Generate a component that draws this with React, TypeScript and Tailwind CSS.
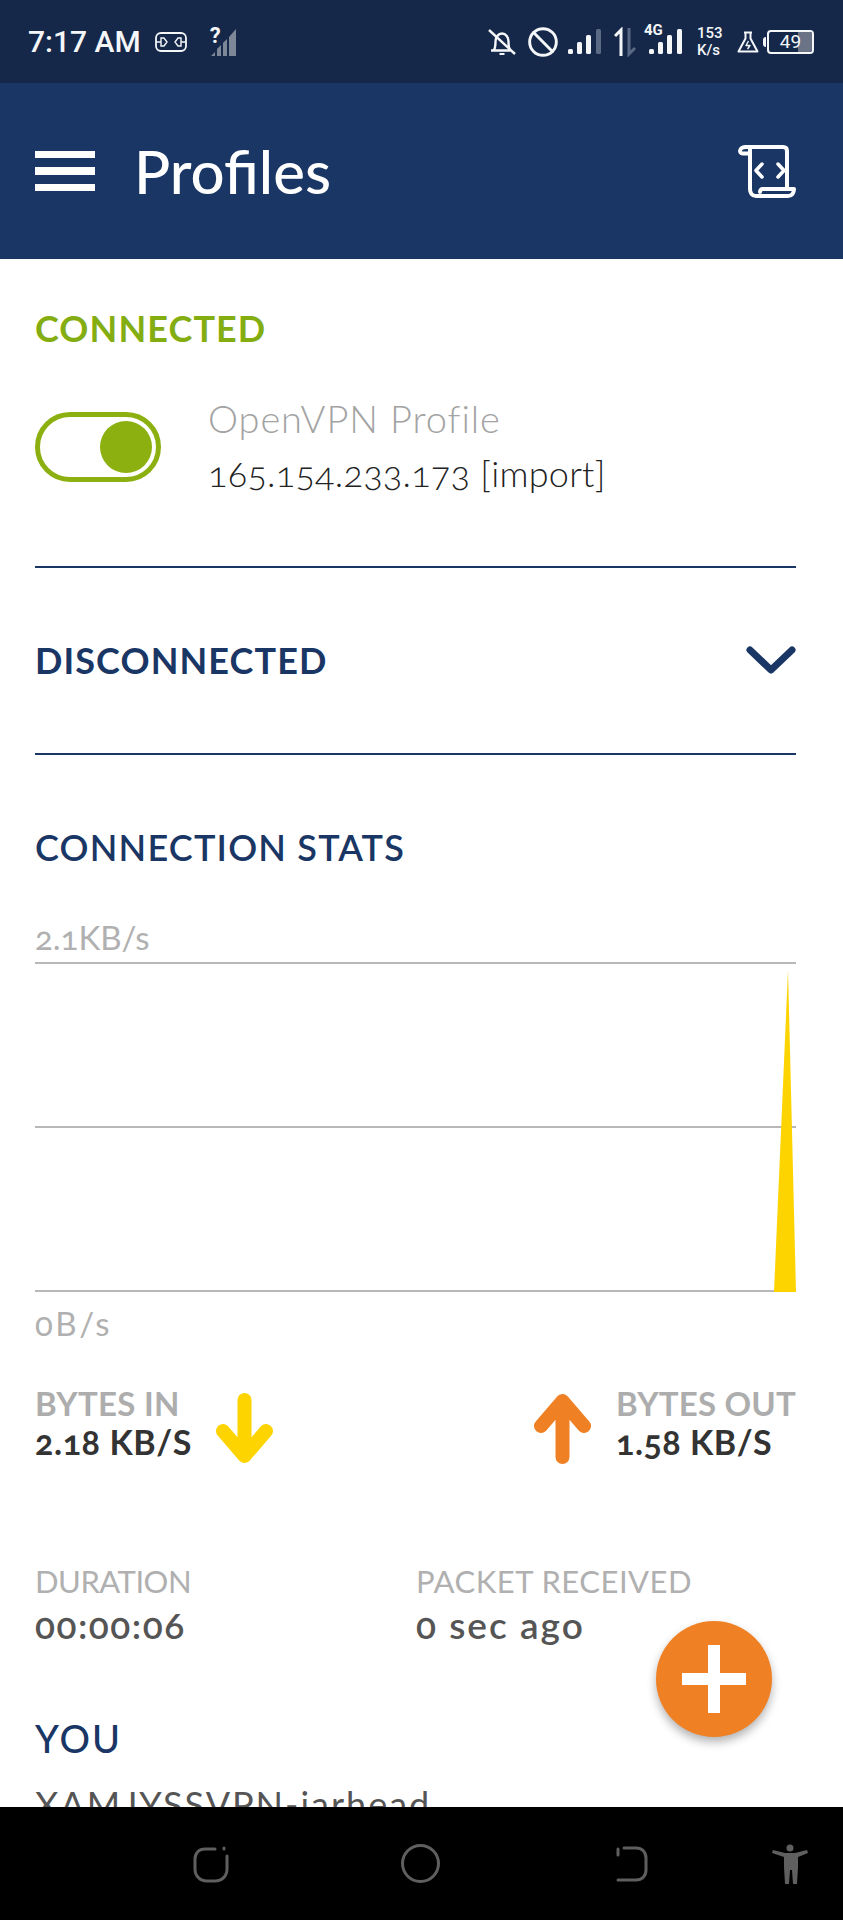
import { Ban } from "lucide-react";

function BellOff() {
    return (
        <svg viewBox="0 0 28 28" className="w-[28px] h-[28px]" fill="none" stroke="#f4f6f8" strokeWidth="2.400">
            <path d="M3 22.500h19.500M5.500 22.500c2-2 2-5 2-9 0-4 2.500-8 6.500-8s6.500 4 6.500 8c0 3 0 6 1.500 8.500" />
            <path d="M1 2l26 24" />
            <path d="M11.500 26h5" strokeWidth="2" />
        </svg>
    );
}

function Bars({ dim }: { dim?: boolean }) {
    return (
        <svg viewBox="0 0 34 26" className="w-[34px] h-[26px]" fill="#f4f6f8">
            <rect x="0" y="20" width="5" height="5" rx="1.500" />
            <rect x="9" y="13" width="5" height="12" rx="1.500" />
            <rect x="18" y="6" width="5" height="19" rx="1.500" />
            <rect x="28" y="0" width="5" height="25" rx="1.500" fill={dim ? "#5a6a85" : "#f4f6f8"} />
        </svg>
    );
}

function ScrollIcon() {
    return (
        <svg viewBox="0 0 58 53" className="w-[58px] h-[53px]" fill="none" stroke="#fff" strokeWidth="4" strokeLinejoin="round" strokeLinecap="round">
            <path d="M8 2h37c3 0 4 2 4 4v37" />
            <path d="M8 2c-3 0-6 1.500-6 4 0 2 2 2.500 3 2.500h7" />
            <path d="M12 4v40c0 4 2 7 6 7h32c4 0 6-3 6-7H24c-1 0-2 2-2 3" />
            <path d="M24 19l-6 6.500 6 6.500M40 19l6 6.500-6 6.500" strokeWidth="3.500" />
        </svg>
    );
}

function Arrow({ color, up }: { color: string; up?: boolean }) {
    return (
        <svg viewBox="0 0 57 71" className={`w-[57px] h-[71px] ${up ? "rotate-180" : ""}`} fill="none" stroke={color} strokeWidth="14" strokeLinecap="round" strokeLinejoin="round">
            <path d="M28.500 7v54M7 38l21.500 25L50 38" />
        </svg>
    );
}

export default function App() {
    return (
        <div className="h-[1920px] w-[843px] flex flex-col overflow-hidden bg-white font-[Lato,sans-serif]">
            {/* status bar */}
            <div className="h-[83px] shrink-0 bg-[#15284a] flex items-center pl-[28px] pr-[29px] text-[#f4f6f8] font-[Roboto,sans-serif]">
                <span className="text-[30px] font-medium leading-none">7:17 AM</span>
                <svg viewBox="0 0 32 20" className="w-[32px] h-[20px] ml-[14px]" fill="none" stroke="#f4f6f8" strokeWidth="1.800">
                    <rect x="1" y="1" width="30" height="18" rx="5" />
                    <path d="M1 10h5M26 10h5M6 6h3l3 4-3 4H6zM26 6h-3l-3 4 3 4h3z" strokeWidth="1.400" />
                </svg>
                <div className="relative w-[26px] h-[28px] ml-[24px]">
                    <svg viewBox="0 0 26 28" className="w-[26px] h-[28px]" fill="#7d8798">
                        <path d="M0 28l4-4v4zM6 28v-7l4-4v11zM12 28V15l4-4v17zM18 28V9l7-8v27z" />
                    </svg>
                    <span className="absolute -left-[1px] -top-[3px] text-[22px] font-bold leading-none">?</span>
                </div>
                <div className="ml-auto flex items-center">
                    <BellOff />
                    <Ban className="w-[32px] h-[32px] ml-[11px]" strokeWidth={2.200} />
                    <div className="ml-[9px] flex">
                        <Bars dim />
                    </div>
                    <svg viewBox="0 0 22 30" className="w-[22px] h-[30px] ml-[12px]" fill="none" strokeWidth="3">
                        <path d="M7 29V3L1 9" stroke="#f4f6f8" />
                        <path d="M15 1v26l6-6" stroke="#5a6a85" />
                    </svg>
                    <div className="relative ml-[9px] w-[37px] h-[26px]">
                        <div className="absolute left-[4px] bottom-0 w-[34px]">
                            <Bars />
                        </div>
                        <span className="absolute -left-[1px] -top-[6px] text-[15px] font-bold leading-none">4G</span>
                    </div>
                    <div className="ml-[15px] flex flex-col text-[15px] font-medium leading-[17px] w-[25px]">
                        <span>153</span>
                        <span>K/s</span>
                    </div>
                    <svg viewBox="0 0 22 22" className="w-[22px] h-[22px] ml-[15px]" fill="none" stroke="#f4f6f8" strokeWidth="2" strokeLinejoin="round">
                        <path d="M7 1.500h8M8.500 1.500v6L1.500 20.500h19l-7-13v-6" />
                        <path d="M11.500 10l-2.500 4.500h4L10.500 18" strokeWidth="1.400" />
                    </svg>
                    <div className="ml-[4px] flex items-center">
                        <div className="w-[3px] h-[10px] bg-[#f4f6f8] rounded-l-sm mr-[1px]" />
                        <div className="relative w-[47px] h-[24px] rounded-[4px] border-2 border-[#f4f6f8] flex items-center justify-center overflow-hidden">
                            <div className="absolute right-0 top-0 bottom-0 w-[14px] bg-[#6b7487]" />
                            <span className="relative text-[19px] leading-none">49</span>
                        </div>
                    </div>
                </div>
            </div>

            {/* app bar */}
            <div className="h-[176px] shrink-0 bg-[#1a3665] flex items-center pl-[35px] pr-[47px]">
                <div className="w-[60px] flex flex-col gap-[9px]">
                    <div className="h-[7px] bg-white" />
                    <div className="h-[8px] bg-white" />
                    <div className="h-[7px] bg-white" />
                </div>
                <h1 className="ml-[39px] text-[60px] font-medium leading-none text-white">Profiles</h1>
                <div className="ml-auto">
                    <ScrollIcon />
                </div>
            </div>

            {/* content */}
            <main className="relative flex-1 min-h-0 overflow-hidden pl-[35px] pr-[47px] oldstyle-nums">
                <h2 className="mt-[51px] text-[36px] font-bold leading-[36px] tracking-[1.100px] text-[#84ad12]">CONNECTED</h2>

                <div className="mt-[51px] h-[100px] flex items-center">
                    <div className="w-[126px] h-[70px] rounded-full border-[5px] border-[#8bb010] flex items-center justify-end pr-[4px]">
                        <div className="w-[52px] h-[52px] rounded-full bg-[#8bb010]" />
                    </div>
                    <div className="ml-[47px] -mt-[2px]">
                        <div className="text-[38px] font-light tracking-[0.900px] leading-[55px] text-[#a3a3a3]">OpenVPN Profile</div>
                        <div className="text-[36px] font-light tracking-[0.250px] leading-[55px] text-[#222]">165.154.233.173 [import]</div>
                    </div>
                </div>

                <div className="mt-[69px] h-[2px] bg-[#1a3665]" />

                <div className="mt-[74px] h-[36px] flex items-center justify-between">
                    <h2 className="text-[36px] font-bold leading-[36px] tracking-[1.100px] text-[#1a3665]">DISCONNECTED</h2>
                    <svg viewBox="0 0 50 28" className="w-[50px] h-[28px]" fill="none" stroke="#1a3665" strokeWidth="7" strokeLinecap="round" strokeLinejoin="round">
                        <path d="M4 4l21 20L46 4" />
                    </svg>
                </div>

                <div className="mt-[75px] h-[2px] bg-[#1a3665]" />

                <h2 className="mt-[74px] text-[36px] font-semibold leading-[36px] tracking-[1.200px] text-[#1a3665]">CONNECTION STATS</h2>

                <div className="mt-[54px] text-[33px] leading-[36px] text-[#b0b0b0]">2.1KB/s</div>

                <div className="relative mt-[7px] h-[330px] flex flex-col justify-between">
                    <div className="h-[2px] bg-[#b8b8b8]" />
                    <div className="h-[2px] bg-[#b8b8b8]" />
                    <div className="h-[2px] bg-[#b8b8b8]" />
                    <svg viewBox="0 0 22 322" className="absolute right-0 bottom-0 w-[22px] h-[322px]" fill="#fdd400">
                        <path d="M14 0L22 322H0z" />
                    </svg>
                </div>

                <div className="mt-[13px] text-[33px] leading-[36px] tracking-[2.500px] text-[#b0b0b0]">0B/s</div>

                <div className="mt-[44px] flex justify-between">
                    <div className="flex items-start">
                        <div>
                            <div className="text-[33px] font-bold leading-[36px] tracking-[0.300px] text-[#adadad]">BYTES IN</div>
                            <div className="mt-[1px] text-[34px] font-bold leading-[40px] tracking-[0.600px] text-[#333]">2.18 KB/S</div>
                        </div>
                        <div className="ml-[24px] mt-[8px]">
                            <Arrow color="#fdd400" />
                        </div>
                    </div>
                    <div className="flex items-start">
                        <div className="mr-[25px] mt-[8px]">
                            <Arrow color="#f08024" up />
                        </div>
                        <div>
                            <div className="text-[33px] font-bold leading-[36px] tracking-[0.200px] text-[#adadad]">BYTES OUT</div>
                            <div className="mt-[1px] text-[34px] font-bold leading-[40px] tracking-[0.500px] text-[#333]">1.58 KB/S</div>
                        </div>
                    </div>
                </div>

                <div className="mt-[99px] flex">
                    <div className="w-[381px]">
                        <div className="text-[31px] leading-[36px] tracking-[-0.500px] text-[#b0b0b0]">DURATION</div>
                        <div className="mt-[6px] text-[37px] font-semibold leading-[40px] tracking-[1.500px] text-[#555]">00:00:06</div>
                    </div>
                    <div>
                        <div className="text-[31px] leading-[36px] tracking-[0.500px] text-[#b0b0b0]">PACKET RECEIVED</div>
                        <div className="mt-[6px] text-[37px] font-semibold leading-[40px] tracking-[2px] text-[#555]">0 sec ago</div>
                    </div>
                </div>

                <h2 className="mt-[75px] text-[38px] font-medium leading-[36px] tracking-[2px] text-[#1a3665]">YOU</h2>
                <div className="mt-[28px] text-[36px] leading-[40px] tracking-[2px] text-[#555]">XAMJYSSVPN-jarhead</div>

                {/* fab */}
                <button className="absolute right-[71px] bottom-[70px] w-[116px] h-[116px] rounded-full bg-[#f08024] shadow-[0_5px_10px_rgba(0,0,0,0.3)] flex items-center justify-center">
                    <svg viewBox="0 0 64 68" className="w-[64px] h-[68px]" fill="#fff">
                        <path d="M26 0h12v28h26v12H38v28H26V40H0V28h26z" />
                    </svg>
                </button>
            </main>

            {/* nav bar */}
            <div className="h-[113px] shrink-0 bg-black relative flex items-center">
                <div className="absolute left-[193px] top-[38px]">
                    <svg viewBox="0 0 36 38" className="w-[36px] h-[38px]" fill="none" stroke="#5f5f5f" strokeWidth="3" strokeLinecap="round">
                        <path d="M22 4H12C6 4 2 8 2 14v10c0 7 5 12 12 12h8c7 0 12-5 12-12V11" />
                        <path d="M31 3v1" />
                    </svg>
                </div>
                <div className="absolute left-[401px] top-[37px] w-[39px] h-[39px] rounded-full border-[3px] border-[#5f5f5f]" />
                <div className="absolute left-[616px] top-[38px]">
                    <svg viewBox="0 0 32 38" className="w-[32px] h-[38px]" fill="none" stroke="#5f5f5f" strokeWidth="3" strokeLinecap="round">
                        <path d="M8 3h12c6 0 10 4 10 10v12c0 6-4 10-10 10H2" />
                        <path d="M2 4v6" />
                    </svg>
                </div>
                <div className="absolute left-[772px] top-[37px]">
                    <svg viewBox="0 0 36 40" className="w-[36px] h-[40px]" fill="#5f5f5f">
                        <circle cx="18" cy="4" r="3.500" />
                        <path d="M0 9l1-3 12 3h10l12-3 1 3-10 4v10l-1 17h-4l-1-14h-2l-1 14h-4l-1-17V13z" />
                    </svg>
                </div>
            </div>
        </div>
    );
}
